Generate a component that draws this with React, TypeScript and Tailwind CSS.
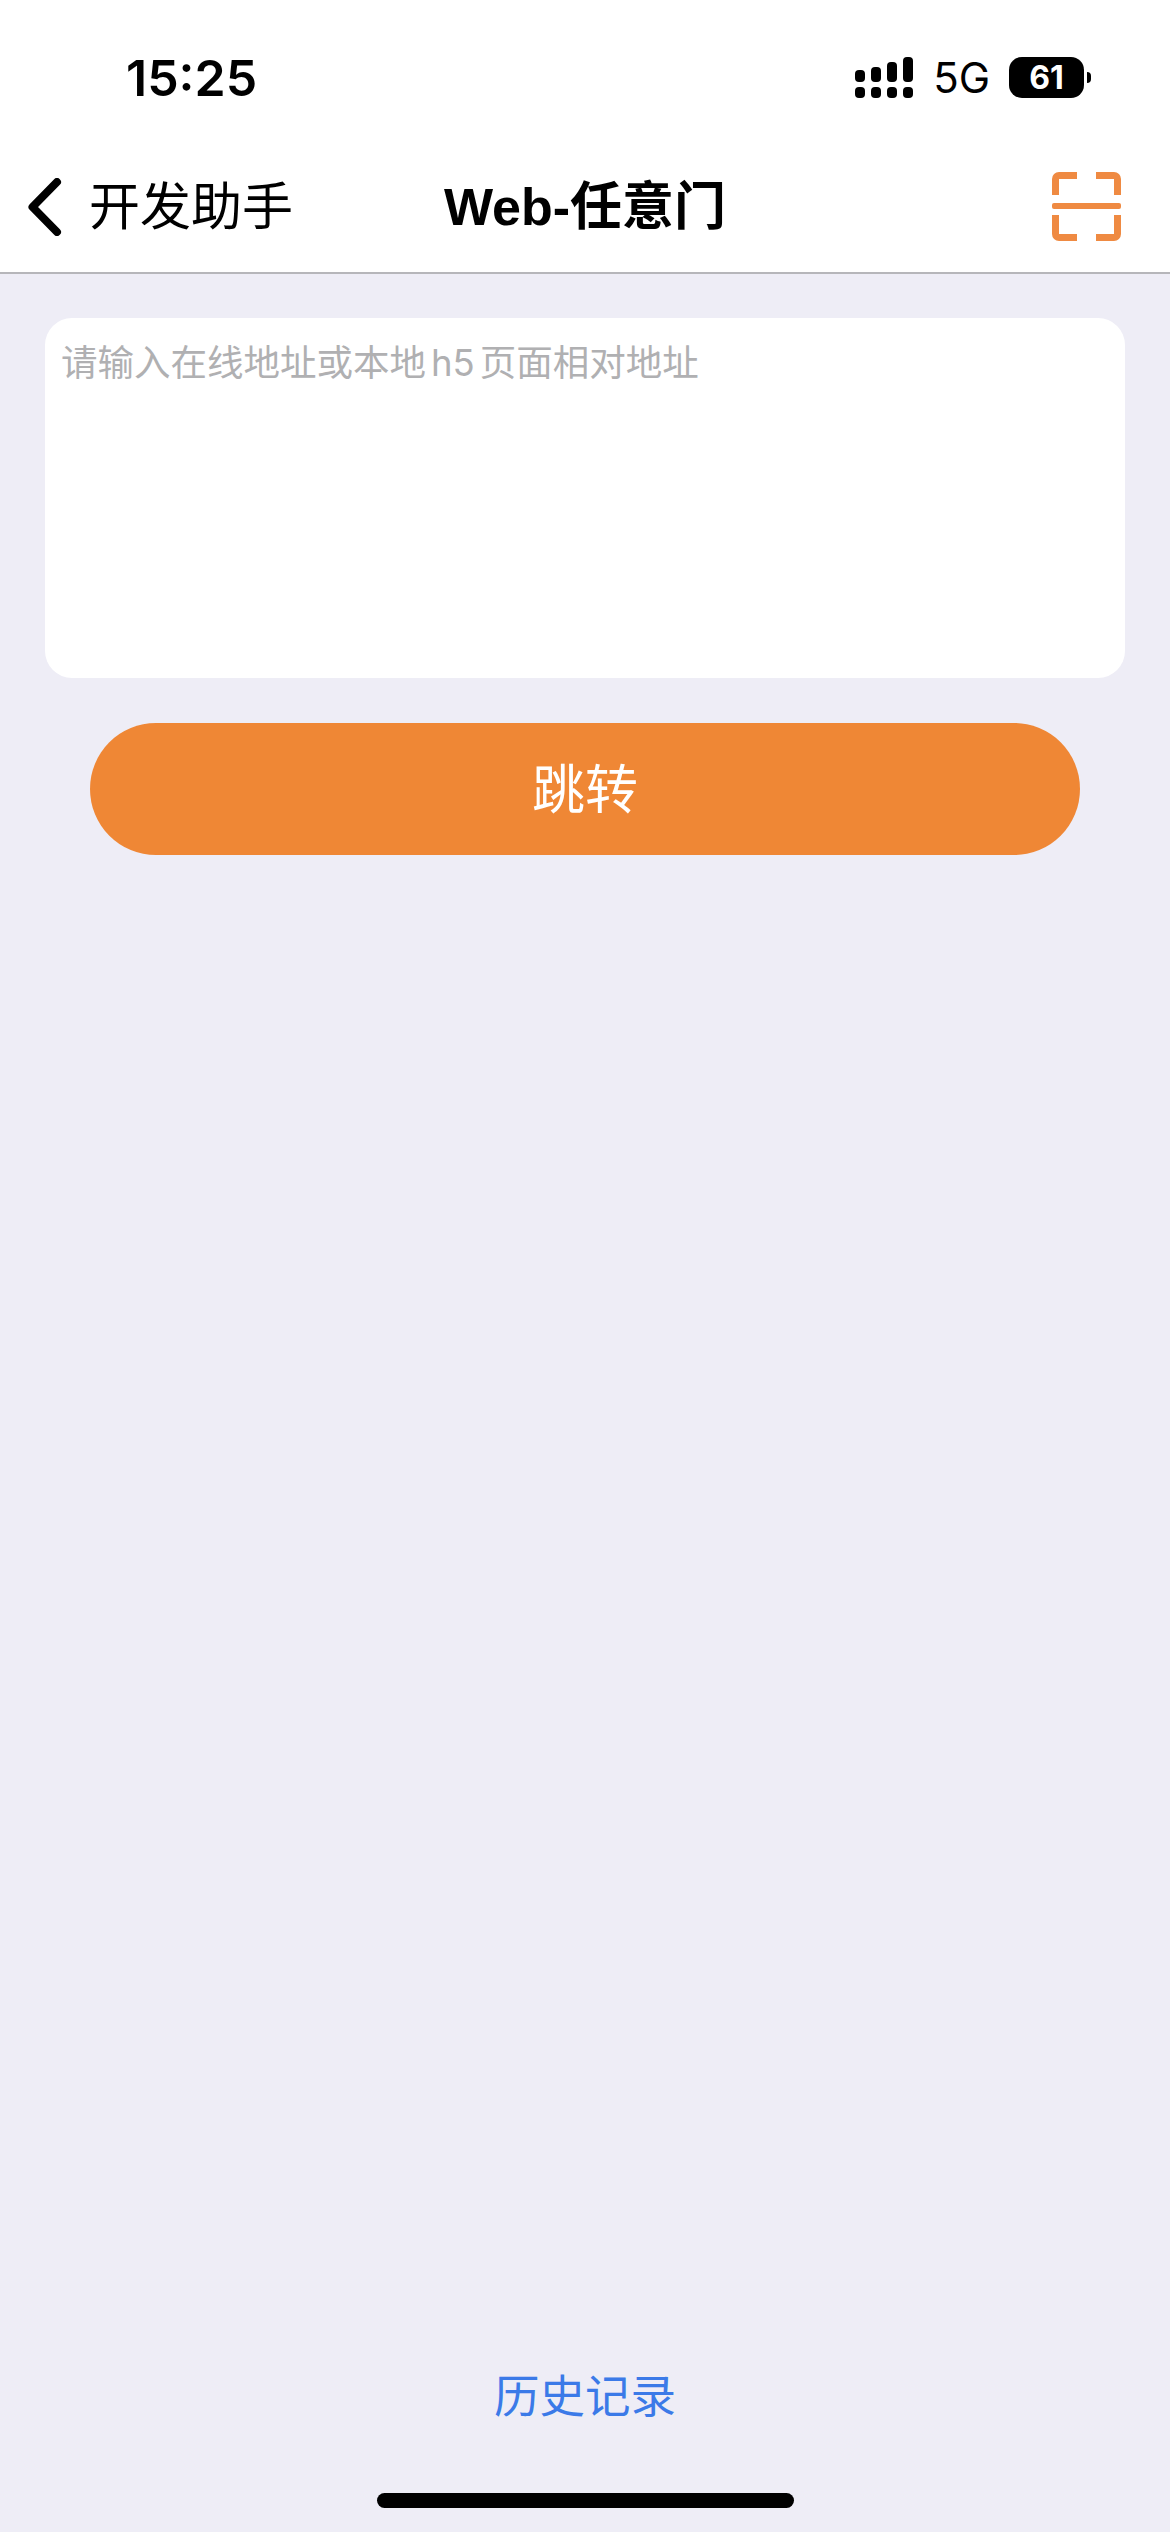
const FONT = 'font-["Inter","Noto_Sans_CJK_SC",sans-serif]';

function SignalIcon() {
  const columns = [
    { x: 0, y: 13, h: 12 },
    { x: 16, y: 10, h: 15 },
    { x: 32, y: 5, h: 20 },
    { x: 48, y: 0, h: 25 },
  ];
  return (
    <svg width="58" height="41" viewBox="0 0 58 41" fill="#000">
      {columns.map((c) => (
        <g key={c.x}>
          <rect x={c.x} y={c.y} width="10" height={c.h} rx="4" />
          <rect x={c.x} y="30" width="10" height="11" rx="4" />
        </g>
      ))}
    </svg>
  );
}

function BackIcon() {
  return (
    <svg width="34" height="58" viewBox="0 0 34 58" fill="none" stroke="#000" strokeWidth="8" strokeLinecap="round" strokeLinejoin="round">
      <path d="M29 4 4.5 29 29 54" />
    </svg>
  );
}

function ScanIcon() {
  return (
    <svg width="69" height="69" viewBox="0 0 69 69" fill="none" stroke="#ef8a42" strokeWidth="7">
      <path d="M25 3.5H7a3.5 3.5 0 0 0-3.5 3.5V23" />
      <path d="M44 3.5H62a3.5 3.5 0 0 1 3.5 3.5V23" />
      <path d="M3.5 43V62a3.5 3.5 0 0 0 3.5 3.5H25" />
      <path d="M65.5 43V62a3.5 3.5 0 0 1-3.5 3.5H44" />
      <rect x="0" y="31" width="69" height="6" rx="2" fill="#ef8a42" stroke="none" />
    </svg>
  );
}

export default function App() {
  return (
    <div className={`${FONT} flex h-[2532px] w-[1170px] flex-col bg-[#eeedf6]`}>
      {/* status bar + nav */}
      <div className="border-b-2 border-[#b6b6ba] bg-white">
        <div className="flex h-[150px] items-start justify-between pt-[51px] pr-[79px] pl-[126px]">
          <span className="text-[50px] leading-[54px] font-semibold text-black">15:25</span>
          <div className="mt-[6px] flex items-center">
            <SignalIcon />
            <span className="ml-[20px] text-[42px] leading-[41px] text-black">5G</span>
            <div className="ml-[19px] flex h-[41px] w-[75px] items-center justify-center rounded-[13px] bg-black text-[32px] leading-none font-bold text-white">
              61
            </div>
            <div className="ml-[3px] h-[11px] w-[4px] rounded-r-full bg-black" />
          </div>
        </div>
        <div className="grid h-[122px] grid-cols-[1fr_auto_1fr] items-center px-[28px] pb-[9px]">
          <div className="flex items-center">
            <BackIcon />
            <span className="ml-[27px] text-[51px] leading-[60px] text-black">开发助手</span>
          </div>
          <span className={'font-["Liberation_Sans","Noto_Sans_CJK_SC",sans-serif] text-[52px] leading-[60px] font-semibold text-black'}>
            Web-任意门
          </span>
          <div className="flex justify-end pr-[21px]">
            <ScanIcon />
          </div>
        </div>
      </div>

      {/* address input */}
      <div className="mx-[45px] mt-[44px] h-[360px] rounded-[27px] bg-white px-[16px] pt-[22px]">
        <p className="text-[36.5px] leading-[46px] text-[#b0b0b2]">
          请输入在线地址或本地<span className="mx-[5px]">h5</span>页面相对地址
        </p>
      </div>

      <button className="mx-[90px] mt-[45px] flex h-[132px] items-center justify-center rounded-full bg-[#ef8735] pt-[4px] text-[53px] text-white">
        跳转
      </button>

      {/* footer */}
      <div className="mt-auto flex flex-col items-center pb-[24px]">
        <span className="text-[45.5px] leading-[60px] text-[#3b7ae8]">历史记录</span>
        <div className="mt-[66px] h-[15px] w-[417px] rounded-full bg-black" />
      </div>
    </div>
  );
}
